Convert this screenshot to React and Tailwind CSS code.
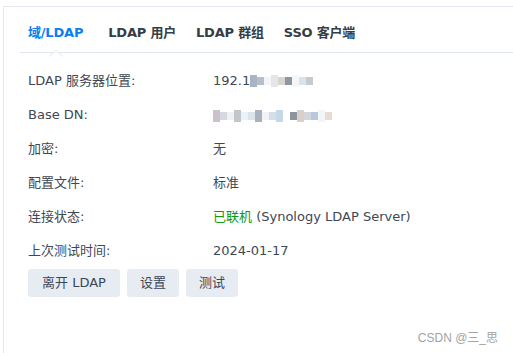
import React from 'react';

const tabs = ['域/LDAP', 'LDAP 用户', 'LDAP 群组', 'SSO 客户端'];

// mosaic blocks standing in for blurred-out values
const ipBlur = ['#a9b4c4', '#b8bec8', '#f1f4f8', '#e4e6ea', '#d9d6d2', '#8f969c', '#f4f6f8', '#d6e4f0', '#c7c9cb'];
const dnBlur = [
  '#c9c2cc', '#d5d8de', '#eef1f2', '#c2c5c9', '#e7f3f6', '#dde3ea', '#a8b2be', '#f0f2f4',
  '#d6dde6', '#c4d8ea', '#ffffff', '#8d969c', '#d9d0cb', '#d2d6db', '#b8c8dc', '#f3f6f8', '#eadbd0',
];

const Mosaic = ({ colors, cell = 7, h = 12 }) => (
  <span className="inline-flex items-center align-middle">
    {colors.map((c, i) => (
      <span key={i} style={{ background: c, width: cell, height: i % 3 === 0 ? h : h - 4 }} />
    ))}
  </span>
);

const rows = [
  { label: 'LDAP 服务器位置:', value: <span className="flex items-center">192.1<Mosaic colors={ipBlur} /></span> },
  { label: 'Base DN:', value: <Mosaic colors={dnBlur} /> },
  { label: '加密:', value: '无' },
  { label: '配置文件:', value: '标准' },
  {
    label: '连接状态:',
    value: (
      <span>
        <span className="text-[#109a10]">已联机</span> (Synology LDAP Server)
      </span>
    ),
  },
  { label: '上次测试时间:', value: '2024-01-17' },
];

const buttons = [
  { text: '离开 LDAP', cls: 'px-[14px]' },
  { text: '设置', cls: 'px-[13px]' },
  { text: '测试', cls: 'px-[13px]' },
];

export default function App() {
  return (
    <div
      className="relative h-[353px] w-[513px] overflow-hidden bg-white pt-[6px] pl-[3px] text-[13px] text-[#3e4855]"
      style={{ fontFamily: '"DejaVu Sans", "Noto Sans CJK SC", sans-serif' }}
    >
      <div className="h-full border-t border-l border-[#e3e8ef]">
        {/* Tabs */}
        <div className="ml-4 flex h-[46px] items-center gap-[20px] border-b border-[#dfe5ec] pl-2 pt-[7px]">
          {tabs.map((t, i) => (
            <div
              key={t}
              className={`relative font-bold tracking-[-0.2px] ${i === 0 ? 'mr-[5px] text-[#0a7ff0]' : 'text-[#353d48]'}`}
            >
              {t}
              {i === 0 && (
                <svg
                  className="absolute left-1/2 -translate-x-1/2 bottom-[-14px]"
                  width="14"
                  height="7"
                  viewBox="0 0 14 7"
                >
                  <polygon points="0,6.5 7,0.5 14,6.5" fill="#fff" />
                  <polyline points="0,6.5 7,0.5 14,6.5" fill="none" stroke="#dfe5ec" strokeWidth="1" />
                </svg>
              )}
            </div>
          ))}
        </div>

        {/* Details */}
        <div className="mt-[11px] pl-6">
          {rows.map((r) => (
            <div key={r.label} className="flex h-[34px] items-center">
              <div className="w-[185px] shrink-0">{r.label}</div>
              <div>{r.value}</div>
            </div>
          ))}

          <div className="mt-[1px] flex gap-[7px]">
            {buttons.map((b) => (
              <button
                key={b.text}
                className={`h-[28px] rounded-[3px] bg-[#e7ecf3] text-[13px] text-[#3b4757] ${b.cls}`}
              >
                {b.text}
              </button>
            ))}
          </div>
        </div>
      </div>

      <div
        className="absolute right-[15px] bottom-[6px] text-[12px] text-[#a3a3a3]"
        style={{ fontFamily: '"Liberation Sans", "Noto Sans CJK SC", sans-serif' }}
      >
        CSDN @三_思
      </div>
    </div>
  );
}
